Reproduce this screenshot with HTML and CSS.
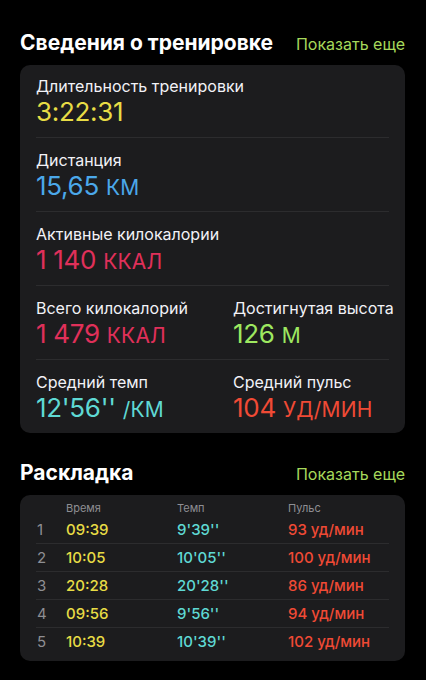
FILE: index.html
```html
<!DOCTYPE html>
<html lang="ru">
<head>
  <meta charset="UTF-8">
  <meta name="viewport" content="width=device-width, initial-scale=1">
  <title>Сведения о тренировке</title>
  <link rel="stylesheet" href="styles.css">
</head>
<body>

<div class="page">

  <!-- Workout details -->
  <div class="section-head">
    <h2>Сведения о тренировке</h2>
    <a href="#" class="more">Показать еще</a>
  </div>

  <div class="card">
    <div class="row">
      <div class="stat">
        <div class="label">Длительность тренировки</div>
        <div class="value yellow">3:22:31</div>
      </div>
    </div>
    <div class="row">
      <div class="stat">
        <div class="label">Дистанция</div>
        <div class="value blue">15,65 <span class="unit">км</span></div>
      </div>
    </div>
    <div class="row">
      <div class="stat">
        <div class="label">Активные килокалории</div>
        <div class="value pink">1 140 <span class="unit">ккал</span></div>
      </div>
    </div>
    <div class="row two">
      <div class="stat">
        <div class="label">Всего килокалорий</div>
        <div class="value pink">1 479 <span class="unit">ккал</span></div>
      </div>
      <div class="stat">
        <div class="label">Достигнутая высота</div>
        <div class="value green">126 <span class="unit">м</span></div>
      </div>
    </div>
    <div class="row two">
      <div class="stat">
        <div class="label">Средний темп</div>
        <div class="value cyan">12'56'' <span class="unit">/км</span></div>
      </div>
      <div class="stat">
        <div class="label">Средний пульс</div>
        <div class="value orange">104 <span class="unit">уд/мин</span></div>
      </div>
    </div>
  </div>

  <!-- Splits -->
  <div class="section-head">
    <h2>Раскладка</h2>
    <a href="#" class="more">Показать еще</a>
  </div>

  <div class="card splits">
    <div class="split head">
      <span></span>
      <span>Время</span>
      <span>Темп</span>
      <span>Пульс</span>
    </div>
    <div class="split">
      <span class="num">1</span>
      <span class="yellow">09:39</span>
      <span class="cyan">9'39''</span>
      <span class="orange">93 уд/мин</span>
    </div>
    <div class="split">
      <span class="num">2</span>
      <span class="yellow">10:05</span>
      <span class="cyan">10'05''</span>
      <span class="orange">100 уд/мин</span>
    </div>
    <div class="split">
      <span class="num">3</span>
      <span class="yellow">20:28</span>
      <span class="cyan">20'28''</span>
      <span class="orange">86 уд/мин</span>
    </div>
    <div class="split">
      <span class="num">4</span>
      <span class="yellow">09:56</span>
      <span class="cyan">9'56''</span>
      <span class="orange">94 уд/мин</span>
    </div>
    <div class="split">
      <span class="num">5</span>
      <span class="yellow">10:39</span>
      <span class="cyan">10'39''</span>
      <span class="orange">102 уд/мин</span>
    </div>
  </div>

</div>

</body>
</html>
```

FILE: styles.css
```css
/* Global Styles */
body {
  font-family: 'Inter', 'Liberation Sans', sans-serif;
  margin: 0;
  background: #000;
  color: #fff;
}

.page {
  padding: 31px 21px 0 20px;
}

.section-head {
  display: flex;
  justify-content: space-between;
  align-items: baseline;
  margin-bottom: 10px;
}

.section-head h2 {
  margin: 0;
  font-size: 21px;
  line-height: 24px;
  font-weight: 700;
}

.more {
  color: #a6d95b;
  font-size: 16px;
  text-decoration: none;
}

.card {
  background: #1c1c1e;
  border-radius: 10px;
  padding: 0 16px;
  margin-bottom: 28px;
}

/* Workout details */
.row {
  padding: 12px 0 10px;
  border-top: 1px solid #2c2c2e;
}

.row:first-child {
  border-top: none;
  padding-top: 11px;
}

.row.two {
  display: grid;
  grid-template-columns: 197px 1fr;
}

.label {
  font-size: 16px;
  line-height: 21px;
  color: #f2f2f7;
  white-space: nowrap;
}

.value {
  font-size: 26px;
  line-height: 30px;
  letter-spacing: -0.3px;
  white-space: nowrap;
}

.value .unit {
  font-size: 21px;
  line-height: 1;
  text-transform: uppercase;
  letter-spacing: 0.2px;
}

.yellow { color: #e8dc45; }
.blue   { color: #4ba8ea; }
.pink   { color: #e0305a; }
.green  { color: #9ee860; }
.cyan   { color: #5fd9d4; }
.orange { color: #f04a35; }

/* Splits table */
.splits {
  padding: 6px 16px 6px;
}

.split {
  display: grid;
  grid-template-columns: 30px 111px 111px 1fr;
  padding: 4px 0;
  font-size: 15px;
  line-height: 19px;
  font-weight: 500;
  border-top: 1px solid #2c2c2e;
}

.split.head {
  padding: 0;
  border-top: none;
  font-size: 11px;
  line-height: 14px;
  font-weight: 400;
  color: #8e8e93;
}

.split.head + .split {
  border-top: none;
  padding-top: 5px;
}

.split .num {
  color: #8e8e93;
  font-weight: 400;
  padding-left: 1px;
}
```
